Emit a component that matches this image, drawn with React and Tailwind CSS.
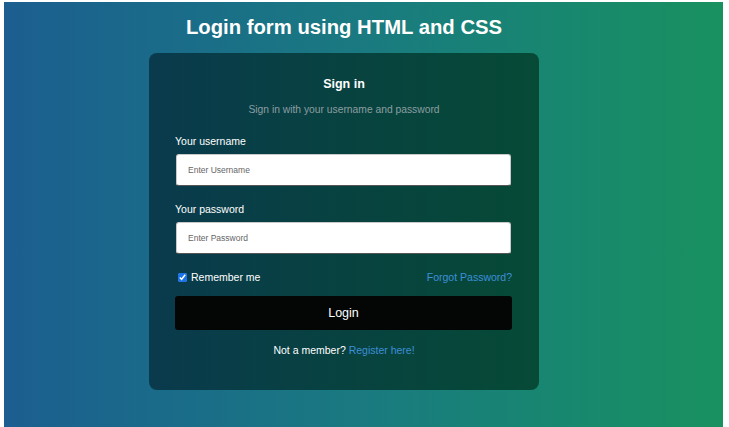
export default function App() {
	return (
		<div className="w-[729px] h-[427px] bg-white pt-[2px] pl-[4px] pr-[6px] overflow-hidden font-['Liberation_Sans',Arial,sans-serif]">
			<div className="h-full bg-gradient-to-r from-[#1c5e90] via-[#1a7a80] to-[#19915f] pl-[145px]">
				<div className="w-[390px] flex flex-col items-center">
					<h1 className="text-white font-bold text-[20.3px] leading-[24px] mt-[13px] mb-[14px]">
						Login form using HTML and CSS
					</h1>
					<div className="w-[390px] h-[337px] rounded-[8px] bg-gradient-to-r from-[#0a3a4d] via-[#084240] to-[#064a36] px-[26px] pt-[24px] flex flex-col">
						<h2 className="text-white font-bold text-[12.5px] leading-[15px] text-center">Sign in</h2>
						<p className="text-[#8b9ea0] text-[10.3px] leading-[13px] text-center mt-[11px]">
							Sign in with your username and password
						</p>
						<label className="text-white text-[10.5px] leading-[13px] mt-[19px]">Your username</label>
						<input
							type="text"
							placeholder="Enter Username"
							className="mt-[6px] h-[32px] ml-[1px] w-[335px] bg-white rounded-[3px] border border-[#c8c8c8] border-b-[#555] px-[11px] text-[8.5px] placeholder:text-[#666] outline-none"
						/>
						<label className="text-white text-[10.5px] leading-[13px] mt-[17px]">Your password</label>
						<input
							type="password"
							placeholder="Enter Password"
							className="mt-[6px] h-[32px] ml-[1px] w-[335px] bg-white rounded-[3px] border border-[#c8c8c8] border-b-[#555] px-[11px] text-[8.5px] placeholder:text-[#666] outline-none"
						/>
						<div className="flex items-center justify-between mt-[17px] h-[13px]">
							<label className="flex items-center text-white text-[10.5px] leading-[13px]">
								<input type="checkbox" defaultChecked className="w-[9px] h-[9px] ml-[3px] mr-[4px] accent-[#1a73e8]" />
								Remember me
							</label>
							<a className="text-[#3d8fd8] text-[10.5px] leading-[13px] mr-[1px]">Forgot Password?</a>
						</div>
						<button className="mt-[12px] h-[34px] w-[337px] rounded-[3px] bg-[#030605] text-white text-[12.5px]">
							Login
						</button>
						<p className="text-white text-[10.5px] leading-[13px] text-center mt-[14px]">
							Not a member? <a className="text-[#3d8fd8]">Register here!</a>
						</p>
					</div>
				</div>
			</div>
		</div>
	);
}
